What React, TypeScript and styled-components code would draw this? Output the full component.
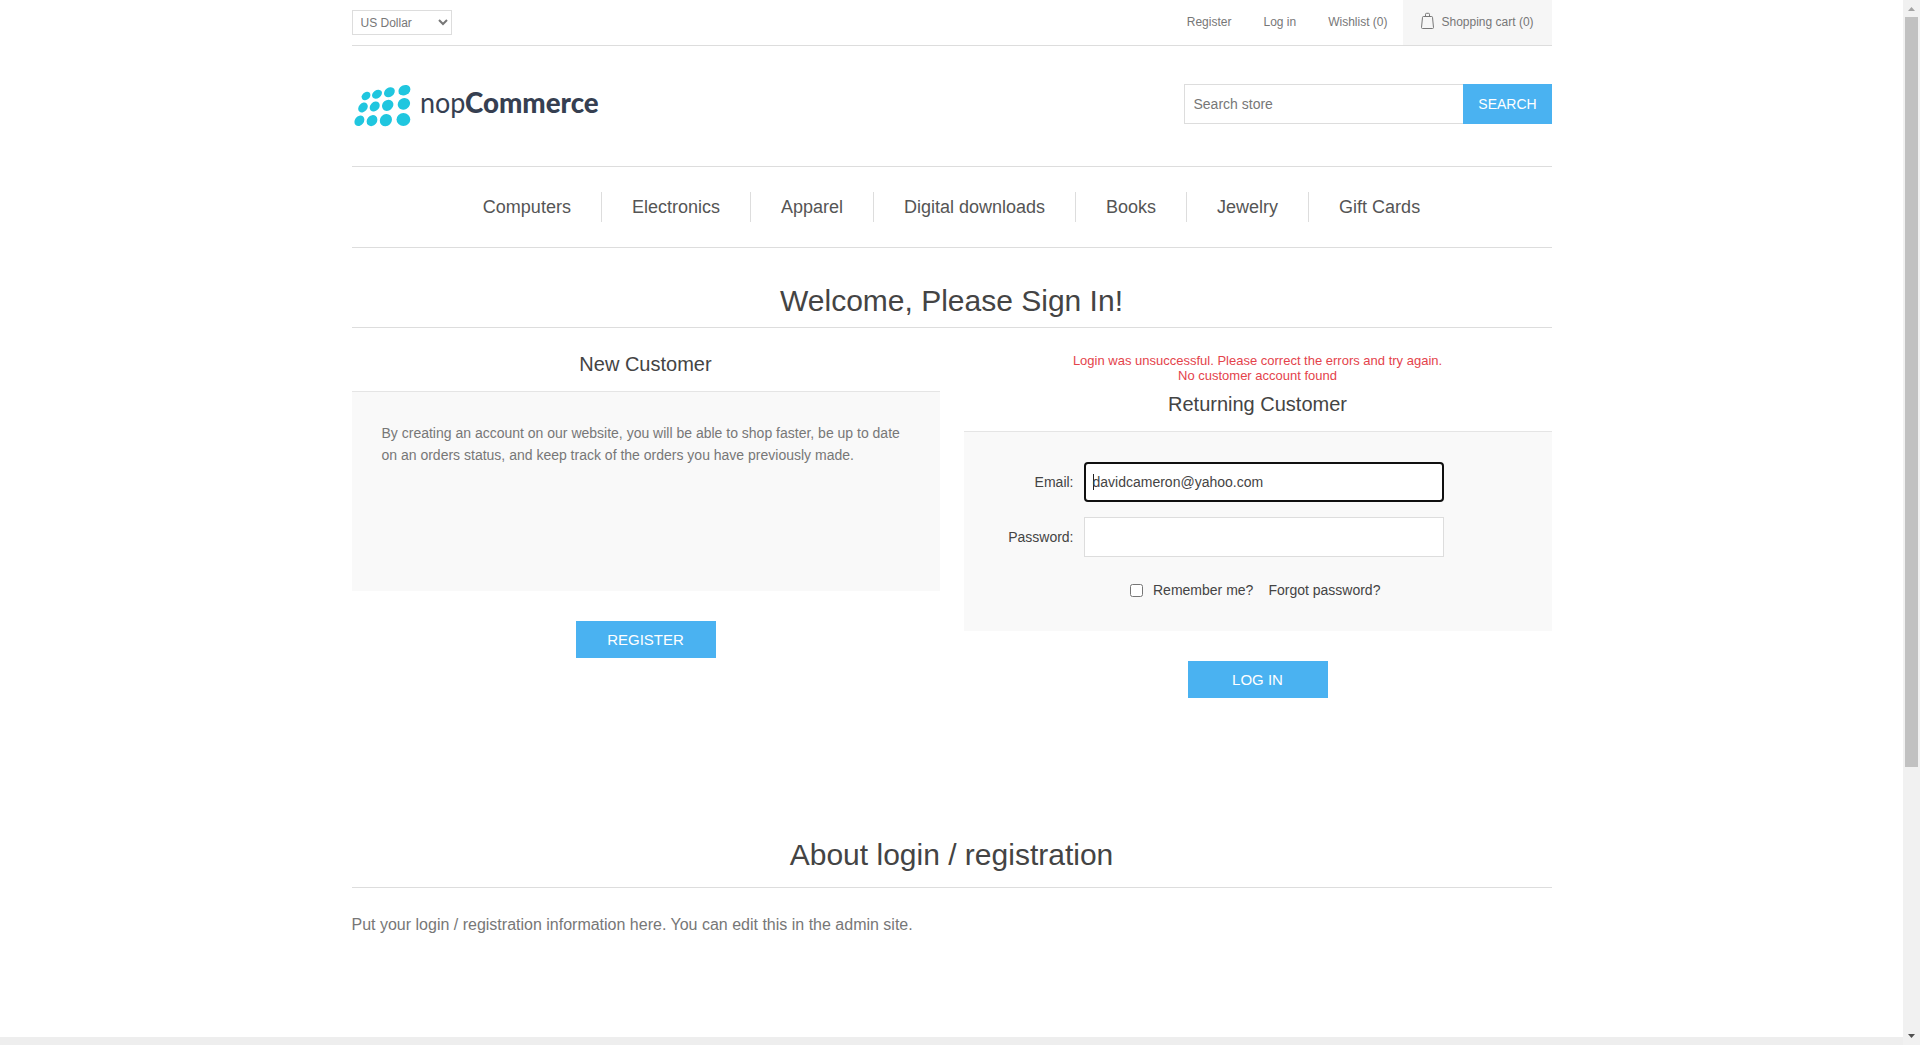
import React from "react";
import styled, { createGlobalStyle } from "styled-components";

const GlobalStyle = createGlobalStyle`
  *, *::before, *::after { box-sizing: border-box; }
  html, body { margin: 0; padding: 0; overflow: hidden; background: #fff; }
  body, input, select, button { font-family: "Liberation Sans", Arial, Helvetica, sans-serif; }
  h1, h2, p, ul { margin: 0; padding: 0; font-weight: normal; }
  a { color: inherit; text-decoration: none; }
`;

const Window = styled.div`
  display: flex;
  height: 1045px;
  color: #777;
  font-size: 14px;
`;

const Viewport = styled.div`
  flex: 1;
  min-width: 0;
  display: flex;
  flex-direction: column;
`;

const Wrapper = styled.div`
  flex: 1;
  width: 1200px;
  margin: 0 auto;
`;

const Footer = styled.footer`
  height: 8px;
  background: #eee;
`;

const HeaderUpper = styled.div`
  display: flex;
  justify-content: space-between;
  align-items: flex-start;
  height: 46px;
  border-bottom: 1px solid #ddd;
`;

const Currency = styled.select`
  width: 100px;
  height: 25px;
  margin-top: 10px;
  padding: 0 4px;
  border: 1px solid #ddd;
  border-radius: 0;
  background: #fff;
  color: #777;
  font-size: 12px;
`;

const HeaderLinks = styled.nav`
  display: flex;
  height: 45px;
  font-size: 12px;
  line-height: 44px;
`;

const HeaderLink = styled.a`
  margin-right: 32px;
`;

const LastHeaderLink = styled(HeaderLink)`
  margin-right: 15px;
`;

const CartLink = styled.a`
  display: flex;
  gap: 8px;
  width: 149px;
  padding-left: 18px;
  background: #f6f6f6;
`;

const CartIcon = styled.svg`
  margin-top: 12px;
`;

const HeaderLower = styled.div`
  display: flex;
  justify-content: space-between;
  height: 121px;
  padding-top: 38px;
  border-bottom: 1px solid #ddd;
`;

const Logo = styled.svg`
  display: block;
  margin-top: -14px;
`;

const SearchBox = styled.form`
  display: flex;
  width: 368px;
  height: 40px;
`;

const SearchInput = styled.input`
  flex: 1;
  min-width: 0;
  height: 40px;
  padding: 0 9px;
  border: 1px solid #ddd;
  border-right: 0;
  border-radius: 0;
  font-size: 14px;
  color: #777;
  &::placeholder { color: #777; opacity: 1; }
`;

const SearchButton = styled.button`
  width: 89px;
  border: 0;
  padding: 0 0 0 1px;
  background: #4ab2f1;
  color: #fff;
  font-size: 14px;
`;

const Menu = styled.nav`
  display: flex;
  justify-content: center;
  height: 81px;
  padding-top: 25px;
  border-bottom: 1px solid #ddd;
`;

const MenuItem = styled.a`
  height: 30px;
  padding: 0 30px;
  color: #555;
  font-size: 18px;
  line-height: 30px;
  & + & { border-left: 1px solid #ddd; }
`;

const PageTitle = styled.h1<{ $top: number; $height: number }>`
  height: ${(p) => p.$height}px;
  padding-top: ${(p) => p.$top}px;
  border-bottom: 1px solid #ddd;
  color: #444;
  font-size: 30px;
  line-height: 33px;
  text-align: center;
`;

const Columns = styled.div`
  display: flex;
  justify-content: space-between;
  height: 492px;
  padding-top: 25px;
`;

const Column = styled.section`
  display: flex;
  flex-direction: column;
  align-items: center;
  width: 588px;
`;

const Errors = styled.div`
  height: 40px;
  color: #e4434b;
  font-size: 13px;
  line-height: 15px;
  text-align: center;
`;

const BlockTitle = styled.h2`
  height: 38px;
  color: #444;
  font-size: 20px;
  line-height: 22px;
`;

const Panel = styled.div`
  width: 100%;
  height: 200px;
  border-top: 1px solid #e5e5e5;
  background: #f9f9f9;
`;

const Note = styled.p`
  padding: 30px;
  line-height: 22px;
`;

const ActionButton = styled.button`
  width: 140px;
  height: 37px;
  margin-top: 30px;
  padding: 0;
  border: 0;
  background: #4ab2f1;
  color: #fff;
  font-size: 15px;
`;

const Fields = styled.div`
  display: flex;
  flex-direction: column;
  gap: 15px;
  padding-top: 30px;
`;

const Field = styled.label`
  display: flex;
  align-items: center;
  color: #444;
`;

const FieldLabel = styled.span`
  width: 110px;
  margin-right: 10px;
  text-align: right;
`;

const FieldBox = styled.span<{ $focused?: boolean }>`
  display: flex;
  align-items: center;
  width: 360px;
  height: 40px;
  padding-left: ${(p) => (p.$focused ? 7 : 8)}px;
  border: ${(p) => (p.$focused ? "2px solid #101010" : "1px solid #ddd")};
  border-radius: ${(p) => (p.$focused ? 4 : 0)}px;
  background: #fff;
`;

const Caret = styled.span`
  width: 1px;
  height: 16px;
  margin-right: -1px;
  background: #222;
`;

const Options = styled.div`
  display: flex;
  align-items: center;
  padding: 24px 0 0 166px;
  color: #444;
  line-height: 18px;
`;

const Checkbox = styled.input`
  width: 13px;
  height: 13px;
  margin: 1px 10.5px 0 0;
`;

const ForgotLink = styled.a`
  margin-left: 15px;
`;

const TopicText = styled.p`
  padding-top: 24px;
  font-size: 16px;
  line-height: 25px;
`;

const Scrollbar = styled.div`
  display: flex;
  flex-direction: column;
  align-items: center;
  justify-content: space-between;
  width: 17px;
  background: #f1f1f1;
`;

const ScrollTop = styled.div`
  display: flex;
  flex-direction: column;
`;

const ScrollArrow = styled.svg`
  display: block;
`;

const Thumb = styled.div`
  width: 13px;
  height: 750px;
  margin: 0 auto;
  background: #c1c1c1;
`;

/* Each logo dot: centre x, centre y, long radius, short radius, tilt. */
const DOTS = [
  [14, 18, 4.9, 3.7, -42], [25, 16.2, 5.4, 4, -35], [37.4, 14.2, 5.8, 4.5, -35], [52.4, 12.2, 6.3, 4.9, -28],
  [11, 29.5, 5.5, 4.2, -48], [22.7, 28.5, 5.6, 4.4, -45], [35.7, 27.3, 6.1, 5.2, -40], [51.9, 25.9, 6.4, 5.6, -30],
  [7.4, 42.8, 5.7, 4.5, -52], [20, 42.6, 5.9, 5, -50], [33.9, 42.1, 6.4, 5.8, -45], [51.4, 41.5, 6.9, 6.5, 0],
];

const CATEGORIES = ["Computers", "Electronics", "Apparel", "Digital downloads", "Books", "Jewelry", "Gift Cards"];

export default function App() {
  return (
    <>
      <GlobalStyle />
      <Window>
        <Viewport>
          <Wrapper>
            <HeaderUpper>
              <Currency defaultValue="usd">
                <option value="usd">US Dollar</option>
                <option value="eur">Euro</option>
              </Currency>
              <HeaderLinks>
                <HeaderLink>Register</HeaderLink>
                <HeaderLink>Log in</HeaderLink>
                <LastHeaderLink>Wishlist (0)</LastHeaderLink>
                <CartLink>
                  <CartIcon width="13" height="18" viewBox="0 0 13 18" fill="none" stroke="#777" strokeWidth="1">
                    <path d="M2.3 4.5h8.4q.7 0 .8.8l1 10.2q0 1-1 1H1.5q-1 0-1-1l1-10.2q.1-.8.8-.8z" />
                    <path d="M4.5 4V2.3q0-1 1-1h2q1 0 1 1V4" />
                  </CartIcon>
                  <span>Shopping cart (0)</span>
                </CartLink>
              </HeaderLinks>
            </HeaderUpper>
            <HeaderLower>
              <Logo width="260" height="76" viewBox="0 -8 260 76">
                {DOTS.map(([x, y, rx, ry, tilt], i) => (
                  <ellipse key={i} cx={x} cy={y} rx={rx} ry={ry} fill="#20c6df" transform={`rotate(${tilt} ${x} ${y})`} />
                ))}
                <text x="68" y="34.6" fill="#363f51" fontFamily="Lato, sans-serif" fontSize="28.5" textLength="45.4" lengthAdjust="spacingAndGlyphs">nop</text>
                <text x="113" y="34.6" fill="#363f51" fontFamily="Lato, sans-serif" fontSize="28" fontWeight="900" textLength="133.7" lengthAdjust="spacingAndGlyphs">Commerce</text>
              </Logo>
              <SearchBox>
                <SearchInput placeholder="Search store" />
                <SearchButton type="button">SEARCH</SearchButton>
              </SearchBox>
            </HeaderLower>
            <Menu>
              {CATEGORIES.map((name) => (
                <MenuItem key={name}>{name}</MenuItem>
              ))}
            </Menu>
            <PageTitle $top={36} $height={80}>Welcome, Please Sign In!</PageTitle>
            <Columns>
              <Column>
                <BlockTitle>New Customer</BlockTitle>
                <Panel>
                  <Note>
                    By creating an account on our website, you will be able to shop faster, be up to date on an orders
                    status, and keep track of the orders you have previously made.
                  </Note>
                </Panel>
                <ActionButton>REGISTER</ActionButton>
              </Column>
              <Column>
                <Errors>
                  <div>Login was unsuccessful. Please correct the errors and try again.</div>
                  <div>No customer account found</div>
                </Errors>
                <BlockTitle>Returning Customer</BlockTitle>
                <Panel>
                  <Fields>
                    <Field>
                      <FieldLabel>Email:</FieldLabel>
                      <FieldBox $focused>
                        <Caret />
                        davidcameron@yahoo.com
                      </FieldBox>
                    </Field>
                    <Field>
                      <FieldLabel>Password:</FieldLabel>
                      <FieldBox />
                    </Field>
                  </Fields>
                  <Options>
                    <Checkbox type="checkbox" />
                    <span>Remember me?</span>
                    <ForgotLink>Forgot password?</ForgotLink>
                  </Options>
                </Panel>
                <ActionButton>LOG IN</ActionButton>
              </Column>
            </Columns>
            <PageTitle $top={18} $height={68}>About login / registration</PageTitle>
            <TopicText>Put your login / registration information here. You can edit this in the admin site.</TopicText>
          </Wrapper>
          <Footer />
        </Viewport>
        <Scrollbar>
          <ScrollTop>
            <ScrollArrow width="17" height="17" viewBox="0 0 17 17">
              <path d="M5 11L8.5 7L12 11z" fill="#a3a3a3" />
            </ScrollArrow>
            <Thumb />
          </ScrollTop>
          <ScrollArrow width="17" height="17" viewBox="0 0 17 17">
            <path d="M5 6L8.5 10L12 6z" fill="#505050" />
          </ScrollArrow>
        </Scrollbar>
      </Window>
    </>
  );
}
